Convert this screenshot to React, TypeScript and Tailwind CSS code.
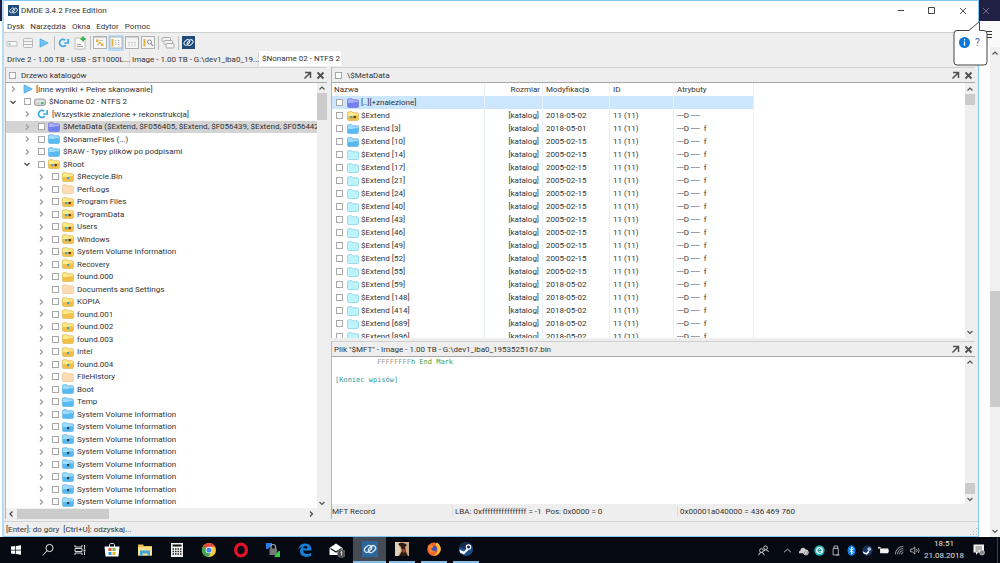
import React from "react";

const tree = [
  { name: "[Inne wyniki + Pełne skanowanie]", level: 0, icon: "play", state: "closed" },
  { name: "$Noname 02 - NTFS 2", level: 0, icon: "drive", state: "open" },
  { name: "[Wszystkie znalezione + rekonstrukcja]", level: 1, icon: "refresh", state: "closed" },
  { name: "$MetaData ($Extend, $F056405, $Extend, $F056439, $Extend, $F056442, $E", level: 1, icon: "indigo", state: "closed", selected: true },
  { name: "$NonameFiles (...)", level: 1, icon: "blue", state: "closed" },
  { name: "$RAW - Typy plików po podpisami", level: 1, icon: "blue", state: "closed" },
  { name: "$Root", level: 1, icon: "yellow2", state: "open" },
  { name: "$Recycle.Bin", level: 2, icon: "yellow1", state: "closed" },
  { name: "PerfLogs", level: 2, icon: "pale", state: "closed" },
  { name: "Program Files", level: 2, icon: "yellow2", state: "closed" },
  { name: "ProgramData", level: 2, icon: "yellow2", state: "closed" },
  { name: "Users", level: 2, icon: "yellow2", state: "closed" },
  { name: "Windows", level: 2, icon: "yellow2", state: "closed" },
  { name: "System Volume Information", level: 2, icon: "yellow2", state: "closed" },
  { name: "Recovery", level: 2, icon: "yellow1", state: "closed" },
  { name: "found.000", level: 2, icon: "yellow", state: "closed" },
  { name: "Documents and Settings", level: 2, icon: "pale", state: "none" },
  { name: "KOPIA", level: 2, icon: "yellow1", state: "closed" },
  { name: "found.001", level: 2, icon: "yellow", state: "closed" },
  { name: "found.002", level: 2, icon: "yellow1", state: "closed" },
  { name: "found.003", level: 2, icon: "yellow", state: "closed" },
  { name: "Intel", level: 2, icon: "yellow1", state: "closed" },
  { name: "found.004", level: 2, icon: "yellow1", state: "closed" },
  { name: "FileHistory", level: 2, icon: "pale", state: "closed" },
  { name: "Boot", level: 2, icon: "blue", state: "closed" },
  { name: "Temp", level: 2, icon: "blue", state: "closed" },
  { name: "System Volume Information", level: 2, icon: "blue", state: "closed" },
  { name: "System Volume Information", level: 2, icon: "blue1", state: "closed" },
  { name: "System Volume Information", level: 2, icon: "blue1", state: "closed" },
  { name: "System Volume Information", level: 2, icon: "blue1", state: "closed" },
  { name: "System Volume Information", level: 2, icon: "blue1", state: "closed" },
  { name: "System Volume Information", level: 2, icon: "blue1", state: "closed" },
  { name: "System Volume Information", level: 2, icon: "blue1", state: "closed" },
  { name: "System Volume Information", level: 2, icon: "blue1", state: "closed" },
];

const files = [
  { name: "$Extend", date: "2018-05-02", icon: "yellow2", attr: "---D ----" },
  { name: "$Extend [3]", date: "2018-05-01", icon: "blue", attr: "---D ----  f" },
  { name: "$Extend [10]", date: "2005-02-15", icon: "blue", attr: "---D ----  f" },
  { name: "$Extend [14]", date: "2005-02-15", icon: "cyan", attr: "---D ----  f" },
  { name: "$Extend [17]", date: "2005-02-15", icon: "cyan", attr: "---D ----  f" },
  { name: "$Extend [21]", date: "2005-02-15", icon: "cyan", attr: "---D ----  f" },
  { name: "$Extend [24]", date: "2005-02-15", icon: "cyan", attr: "---D ----  f" },
  { name: "$Extend [40]", date: "2005-02-15", icon: "cyan", attr: "---D ----  f" },
  { name: "$Extend [43]", date: "2005-02-15", icon: "cyan", attr: "---D ----  f" },
  { name: "$Extend [46]", date: "2005-02-15", icon: "cyan", attr: "---D ----  f" },
  { name: "$Extend [49]", date: "2005-02-15", icon: "cyan", attr: "---D ----  f" },
  { name: "$Extend [52]", date: "2005-02-15", icon: "cyan", attr: "---D ----  f" },
  { name: "$Extend [55]", date: "2005-02-15", icon: "cyan", attr: "---D ----  f" },
  { name: "$Extend [59]", date: "2018-05-02", icon: "cyan", attr: "---D ----  f" },
  { name: "$Extend [148]", date: "2018-05-02", icon: "cyan", attr: "---D ----  f" },
  { name: "$Extend [414]", date: "2018-05-02", icon: "cyan", attr: "---D ----  f" },
  { name: "$Extend [689]", date: "2018-05-02", icon: "cyan", attr: "---D ----  f" },
  { name: "$Extend [896]", date: "2018-05-02", icon: "cyan", attr: "---D ----  f" },
];

const folderColors: Record<string, string[]> = {
  indigo: ["#a9aef9", "#7380ee", "#6470dd"],
  blue: ["#9fdcff", "#58b8f2", "#55aee0"],
  cyan: ["#bdf3fd", "#bdf3fd", "#7fd0de"],
  yellow: ["#fdeb8c", "#f4c04a", "#dcae45"],
  pale: ["#fbdcb4", "#fbdcb4", "#ecc796"],
};

const Folder = ({ kind }: { kind: string }) => {
  const dots = kind.endsWith("2") ? 2 : kind.endsWith("1") ? 1 : 0;
  const base = kind.replace(/[12]$/, "");
  const [top, bottom, line] = folderColors[base];
  return (
    <svg viewBox="0 0 12 10" className="h-[10px] w-3 shrink-0">
      <path d="M.5 2Q.5.7 1.8.7h3l1 1.1h4.2Q11.5 1.8 11.5 3v5.2q0 1.3-1.3 1.3H1.8Q.5 9.500.5 8.200z" fill={top} stroke={line} strokeWidth=".7" />
      <path d="M1 5h5l1-.8h4V8.200q0 .9-.9.9H1.900Q1 9.100 1 8.200z" fill={bottom} />
      {dots === 2 && <rect x="3.200" y="5" width="2.200" height="2.200" fill="#3fa0c8" />}
      {dots === 2 && <rect x="6.500" y="5" width="2.400" height="2.200" fill="#5c3a12" />}
      {dots === 1 && <rect x="5" y="5" width="2.200" height="2.200" fill={base === "blue" ? "#3c3c3c" : "#3fa0c8"} />}
    </svg>
  );
};

const Logo = ({ className, bg = "#1f4a7a" }: { className: string; bg?: string }) => (
  <svg viewBox="0 0 24 24" className={className}>
    <rect width="24" height="24" fill={bg} />
    <g fill="none" stroke="#e4eef8" strokeWidth="1.900">
      <rect x="3" y="8" width="12" height="7.500" rx="3.500" transform="rotate(-42 9 11.750)" />
      <rect x="9" y="8.500" width="12" height="7.500" rx="3.500" transform="rotate(-42 15 12.250)" />
    </g>
  </svg>
);

const Play = () => (
  <svg viewBox="0 0 10 10" className="h-[10px] w-[10px] shrink-0">
    <path d="M1 .8 9.200 5 1 9.200z" fill="#6cc4f5" stroke="#3fa5e0" strokeWidth=".7" />
  </svg>
);

const Refresh = () => (
  <svg viewBox="0 0 12 10" className="h-[10px] w-3 shrink-0" fill="none" stroke="#3fa9e8" strokeWidth="1.700">
    <path d="M7.200 2.200A3.500 3.500 0 1 0 7.800 7" />
    <path d="M10.200 1v4H6.300" />
  </svg>
);

const Drive = () => (
  <svg viewBox="0 0 12 10" className="h-[10px] w-3 shrink-0">
    <rect x=".5" y="2" width="11" height="6.500" rx="2" fill="#d2d2d2" stroke="#8c8c8c" strokeWidth=".8" />
    <path d="M2 4h8" stroke="#f5f5f5" />
    <rect x="7.500" y="5.200" width="2" height="2" fill="#36b24a" />
  </svg>
);

const NodeIcon = ({ kind }: { kind: string }) => {
  if (kind === "play") return <Play />;
  if (kind === "refresh") return <Refresh />;
  if (kind === "drive") return <Drive />;
  return <Folder kind={kind} />;
};

const Chevron = ({ dir, className = "" }: { dir: string; className?: string }) => {
  const d: Record<string, string> = {
    up: "M1.500 5.500 4 3l2.500 2.500",
    down: "M1.500 3 4 5.500 6.500 3",
    left: "M5.500 1.500 3 4l2.500 2.500",
    right: "M3 1.500 5.500 4 3 6.500",
  };
  return (
    <svg viewBox="0 0 8 8" className={"h-2 w-2 shrink-0 " + className} fill="none" stroke="currentColor" strokeWidth="1.200">
      <path d={d[dir]} />
    </svg>
  );
};

const Check = ({ label }: { label: string }) => (
  <input type="checkbox" aria-label={label} className="h-[7px] w-[7px] shrink-0 appearance-none border border-[#a8a8a8] bg-white" />
);

const PanelButtons = () => (
  <div className="ml-auto flex items-center gap-1">
    <button aria-label="Odepnij panel">
      <svg viewBox="0 0 9 9" className="h-[9px] w-[9px]" fill="none" stroke="#505050" strokeWidth="1.500">
        <path d="M2 1.500h5.500V7M7.500 1.500 1.500 7.500" />
      </svg>
    </button>
    <button aria-label="Zamknij panel">
      <svg viewBox="0 0 9 9" className="h-[9px] w-[9px]" fill="none" stroke="#505050" strokeWidth="1.900">
        <path d="m1.500 1.500 6 6m0-6-6 6" />
      </svg>
    </button>
  </div>
);

const PanelHeader = ({ title, check }: { title: string; check?: boolean }) => (
  <div className="flex h-4 shrink-0 items-center border-t border-b border-t-[#d0d0d0] border-b-[#a8a8a8] bg-[#eeeeee] pr-[2px] pl-[2px]">
    {check && (
      <span className="mr-[5px] ml-px flex">
        <Check label={title} />
      </span>
    )}
    <h2 className="whitespace-nowrap">{title}</h2>
    <PanelButtons />
  </div>
);

const Window = () => {
  return (
    <div className="flex min-w-0 flex-1 flex-col border-t border-r border-b border-l-2 border-[#86c8f2] border-l-[#b5def5] bg-[#eeeeee]">
      {/* title bar */}
      <div className="flex h-[19px] shrink-0 items-center bg-white pl-1">
        <Logo className="h-[11px] w-[11px]" />
        <h1 className="pl-[2px]">DMDE 3.4.2 Free Edition</h1>
        <div className="ml-auto flex text-[#444]">
          <button aria-label="Minimalizuj" className="flex w-[30px] justify-center">
            <svg viewBox="0 0 8 8" className="h-2 w-2" stroke="currentColor" fill="none"><path d="M1 3.500h6" /></svg>
          </button>
          <button aria-label="Maksymalizuj" className="flex w-[31px] justify-center">
            <svg viewBox="0 0 8 8" className="h-2 w-2" stroke="currentColor" fill="none"><path d="M.5.5h6v6h-6z" /></svg>
          </button>
          <button aria-label="Zamknij" className="flex w-[31px] justify-center">
            <svg viewBox="0 0 8 8" className="h-2 w-2" stroke="currentColor" strokeWidth=".9" fill="none"><path d="m1 1 6 6m0-6L1 7" /></svg>
          </button>
        </div>
      </div>

      {/* menu */}
      <nav className="flex h-[13px] shrink-0 items-center gap-[6px] border-b border-[#cfcfcf] bg-white pl-[3px]">
        <button>Dysk</button>
        <button>Narzędzia</button>
        <button>Okna</button>
        <button>Edytor</button>
        <button>Pomoc</button>
      </nav>

      <Toolbar />

      {/* tabs */}
      <div className="flex h-[14px] shrink-0 items-end text-left whitespace-nowrap">
        <button className="h-[14px] w-[126px] border-r border-[#d9d9d9] pl-[3px] text-left">Drive 2 - 1.00 TB - USB - ST1000L...</button>
        <button className="h-[14px] w-[129px] border-r border-[#d9d9d9] pl-[2px] text-left">Image - 1.00 TB - G:\dev1_lba0_19...</button>
        <button className="h-[15px] w-[82px] bg-white pl-[3px] text-left">$Noname 02 - NTFS 2</button>
      </div>

      <div className="flex min-h-0 flex-1 gap-1 pr-[3px] pb-[2px] pl-px">
        <TreePanel />
        <div className="flex min-w-0 flex-1 flex-col gap-[3px]">
          <ListPanel />
          <FilePanel />
        </div>
      </div>

      <footer className="flex h-[15px] shrink-0 items-center border-t border-[#d4d4d4] pl-[2px]">
        <span className="whitespace-pre">[Enter]: do góry  [Ctrl+U]: odzyskaj...</span>
        <svg viewBox="0 0 8 8" className="mt-auto ml-auto h-2 w-2" fill="#b8b8b8">
          <path d="M6 0h1v1H6zM6 3h1v1H6zM6 6h1v1H6zM3 3h1v1H3zM3 6h1v1H3zM0 6h1v1H0z" />
        </svg>
      </footer>
    </div>
  );
};

const Separator = () => (
  <div className="flex w-1 justify-center">
    <div className="h-[14px] w-px bg-[#bdbdbd]" />
  </div>
);

const Toolbar = () => {
  const btn = "flex h-4 w-4 shrink-0 items-center justify-center";
  return (
    <div className="flex h-[19px] shrink-0 items-center">
      <button aria-label="Dysk" className={btn}>
        <svg viewBox="0 0 12 12" className="h-3 w-3">
          <rect x="1" y="4.500" width="10" height="4.500" rx=".5" fill="#fafafa" stroke="#aaa" strokeWidth=".8" />
          <path d="M2.500 7h2" stroke="#45b050" />
        </svg>
      </button>
      <button aria-label="Partycje" className={btn}>
        <svg viewBox="0 0 12 12" className="h-3 w-3" fill="#f6f6f6" stroke="#aaa" strokeWidth=".8">
          <rect x="1.500" y="1.500" width="9" height="9" rx="1" />
          <path d="M1.500 4.500h9M1.500 7.500h9" />
        </svg>
      </button>
      <button aria-label="Skanuj" className={btn}><Play /></button>
      <Separator />
      <button aria-label="Odśwież" className={btn}><Refresh /></button>
      <button aria-label="Nowy raport" className={btn}>
        <svg viewBox="0 0 14 14" className="h-[14px] w-[14px]">
          <path d="M2 2h10v11H2z" fill="#fafafa" stroke="#b0b0b0" strokeWidth=".8" />
          <path d="M4 10.500h6M4 8.500h4" stroke="#888" strokeWidth=".8" />
          <path d="M10 .5v5M7.500 3h5" stroke="#39b54a" strokeWidth="2" />
        </svg>
      </button>
      <Separator />
      <button aria-label="Drzewo" className={btn}>
        <svg viewBox="0 0 14 13" className="h-[13px] w-[14px]">
          <rect x=".5" y=".5" width="13" height="12" fill="#f8f8f8" stroke="#b0b0b0" />
          <path d="M1 1.700h12" stroke="#ccc" />
          <path d="M3 3.500h2.500v2.500H3zM5.500 6h2.500v2H5.500zM8 7.500h2.500v2.500H8z" fill="#e3b341" />
          <path d="M6.500 4.500h3.500M4 8.500h2" stroke="#aaa" strokeWidth=".7" />
        </svg>
      </button>
      <button aria-label="Drzewo i lista" aria-pressed="true" className={btn + " bg-[#b9dcf8]"}>
        <svg viewBox="0 0 14 13" className="h-[13px] w-[14px]">
          <rect x="1" y="1" width="12" height="11" fill="#f8f8f8" stroke="#a6a6a6" strokeWidth=".8" />
          <path d="M3.500 3v7.500" stroke="#e3b341" strokeWidth="2" />
          <path d="M6 4.500h1.500M6 6.500h1.500M6 8.500h1.500M9 4.500h1.500M9 6.500h1.500M9 8.500h1.500" stroke="#aaa" strokeWidth=".8" />
        </svg>
      </button>
      <button aria-label="Lista" className={btn}>
        <svg viewBox="0 0 14 13" className="h-[13px] w-[14px]">
          <rect x=".5" y=".5" width="13" height="12" fill="#f6f6f6" stroke="#b0b0b0" />
          <path d="M1 1.700h12" stroke="#ccc" />
          <path d="M3 6.500h2M6 6.500h2M9 6.500h2M3 9h2M6 9h2M9 9h2" stroke="#bbb" strokeWidth=".8" />
        </svg>
      </button>
      <button aria-label="Szukaj" className={btn}>
        <svg viewBox="0 0 14 13" className="h-[13px] w-[14px]">
          <rect x=".5" y=".5" width="13" height="12" fill="#f6f6f6" stroke="#b0b0b0" />
          <path d="M3.500 3v7.500" stroke="#e3b341" strokeWidth="2" />
          <circle cx="8.500" cy="6" r="2" fill="#fff" stroke="#888" />
          <path d="m10 7.500 2 2.500" stroke="#888" strokeWidth="1.200" />
        </svg>
      </button>
      <Separator />
      <button aria-label="Okna" className={btn}>
        <svg viewBox="0 0 14 14" className="h-[14px] w-[14px]" fill="#f2f2f2" stroke="#a4a4a4" strokeWidth=".9">
          <rect x="1" y="1.500" width="8.500" height="4" rx=".8" />
          <rect x="3" y="4.500" width="8.500" height="4" rx=".8" />
          <rect x="5" y="7.500" width="8" height="4.500" rx=".8" />
        </svg>
      </button>
      <Separator />
      <button aria-label="O programie" className={btn}><Logo className="h-[13px] w-[13px]" /></button>
    </div>
  );
};

const TreePanel = () => {
  return (
    <section className="mt-px flex w-[322px] shrink-0 flex-col border-l border-[#b4b4b4]">
      <PanelHeader title="Drzewo katalogów" check />
      <div className="flex min-h-0 flex-1">
        <div className="grid min-w-0 flex-1 auto-rows-fr bg-white">
          {tree.map((node, i) => (
            <div key={i} className={"flex min-h-0 items-center overflow-hidden pl-[3px] whitespace-nowrap " + (node.selected ? "bg-[#d4d4d4]" : "")}>
              {node.level > 0 && <span className={node.level === 1 ? "w-[14px] shrink-0" : "w-7 shrink-0"} />}
              {node.state === "none" ? (
                <span className="w-2" />
              ) : (
                <button aria-label="Rozwiń" className={node.state === "open" ? "text-[#444]" : "text-[#999]"}>
                  <Chevron dir={node.state === "open" ? "down" : "right"} />
                </button>
              )}
              {node.icon === "play" || node.icon === "refresh" ? (
                <span className="w-[6px] shrink-0" />
              ) : (
                <span className="mr-[3px] ml-[7px] flex">
                  <Check label={node.name} />
                </span>
              )}
              <NodeIcon kind={node.icon} />
              <span className="pl-[3px]">{node.name}</span>
            </div>
          ))}
        </div>
        <div className="flex w-[10px] flex-col items-center bg-[#efefef] py-px text-[#555]">
          <Chevron dir="up" />
          <div className="mt-px h-[27px] w-full bg-[#cbcbcb]" />
          <Chevron dir="down" className="mt-auto" />
        </div>
      </div>
      <div className="flex h-[11px] shrink-0 items-center bg-[#efefef] pr-3 pl-px text-[#444]">
        <Chevron dir="left" />
        <div className="ml-[2px] h-[10px] w-[92px] bg-[#cbcbcb]" />
        <Chevron dir="right" className="ml-auto" />
      </div>
    </section>
  );
};

const ListPanel = () => {
  const cell = "border-r border-[#e8f1f8] p-0";
  return (
    <section className="mt-px flex min-h-0 flex-1 flex-col border-l border-[#b4b4b4]">
      <PanelHeader title="\$MetaData" check />
      <div className="flex min-h-0 flex-1 bg-white">
        <div className="min-w-0 flex-1 overflow-hidden">
          <table className="w-[422px] table-fixed border-separate border-spacing-0 whitespace-nowrap">
            <thead>
              <tr className="h-[13px] text-left">
                <th className={cell + " w-[153px] pl-[2px] font-normal"}>Nazwa</th>
                <th className={cell + " w-[58px] pr-[2px] text-right font-normal"}>Rozmiar</th>
                <th className={cell + " w-[67px] pl-[3px] font-normal"}>Modyfikacja</th>
                <th className={cell + " w-16 pl-[3px] font-normal"}>ID</th>
                <th className={cell + " pl-[3px] font-normal"}>Atrybuty</th>
              </tr>
            </thead>
            <tbody>
              <tr className="h-[13px] bg-[#cbe6fd]">
                <td className={cell}>
                  <div className="flex items-center pl-1">
                    <Check label="[..]" />
                    <span className="ml-1 flex"><Folder kind="indigo" /></span>
                    <span className="pl-[2px]">[..][+znalezione]</span>
                  </div>
                </td>
                <td className={cell}></td>
                <td className={cell}></td>
                <td className={cell}></td>
                <td className={cell}></td>
              </tr>
              {files.map((file) => (
                <tr key={file.name} className="h-[13px]">
                  <td className={cell}>
                    <div className="flex items-center pl-1">
                      <Check label={file.name} />
                      <span className="ml-1 flex"><Folder kind={file.icon} /></span>
                      <span className="pl-[2px]">{file.name}</span>
                    </div>
                  </td>
                  <td className={cell + " pr-[3px] text-right"}>[katalog]</td>
                  <td className={cell + " pl-[3px]"}>{file.date}</td>
                  <td className={cell + " pl-[3px]"}>11 (11)</td>
                  <td className={cell + " pl-[3px] whitespace-pre"}>{file.attr}</td>
                </tr>
              ))}
            </tbody>
          </table>
        </div>
        <div className="flex w-[10px] flex-col items-center bg-[#efefef] py-[2px] text-[#555]">
          <Chevron dir="up" />
          <div className="mt-px h-[11px] w-full bg-[#cbcbcb]" />
          <Chevron dir="down" className="mt-auto" />
        </div>
      </div>
    </section>
  );
};

const FilePanel = () => {
  return (
    <section className="flex h-[178px] shrink-0 flex-col border-l border-[#b4b4b4]">
      <PanelHeader title={'Plik "$MFT" - Image - 1.00 TB - G:\\dev1_lba0_1953525167.bin'} />
      <div className="flex min-h-0 flex-1 bg-white">
        <div className="flex-1 pt-px pl-[3px] font-['DejaVu_Sans_Mono',monospace] text-[7px] leading-[9px] whitespace-pre">
          <p className="text-[#3f9f3f]">          <span className="text-[#9a9a9a]">FFFFFFFF</span>h End Mark</p>
          <p> </p>
          <p className="text-[#2f9a9a]">[Koniec wpisów]</p>
        </div>
        <div className="flex w-[10px] flex-col items-center bg-[#efefef] py-px text-[#555]">
          <Chevron dir="up" />
          <div className="mt-auto mb-px h-[11px] w-full bg-[#cbcbcb]" />
          <Chevron dir="down" />
        </div>
      </div>
      <div className="flex h-[15px] shrink-0 items-center whitespace-pre">
        <span className="w-[121px] border-r border-[#dcdcdc]">MFT Record</span>
        <span className="w-[225px] border-r border-[#dcdcdc] pl-[2px]">LBA: 0xffffffffffffffff = -1  Pos: 0x0000 = 0</span>
        <span className="pl-[2px]">0x00001a040000 = 436 469 760</span>
      </div>
    </section>
  );
};

// browser window that sticks out behind on the right
const Browser = () => {
  return (
    <div className="flex w-[21px] shrink-0 flex-col bg-white">
      <div className="flex h-[21px] items-center bg-[#1f2044] pl-[3px] text-[#6c6d8c]">
        <button aria-label="Zamknij przeglądarkę">
          <svg viewBox="0 0 8 8" className="h-2 w-2" fill="none" stroke="currentColor"><path d="m1 1 6 6m0-6L1 7" /></svg>
        </button>
      </div>
      <div className="flex h-[26px] items-center bg-[#f9f9fa] pl-1">
        <button aria-label="Menu">
          <svg viewBox="0 0 9 8" className="h-2 w-[9px]" stroke="#333"><path d="M0 1.500h9M0 4.500h9M0 7.500h9" /></svg>
        </button>
      </div>
      <div className="ml-auto flex w-[10px] flex-1 flex-col items-center bg-[#f0f0f0] py-[2px] text-[#555]">
        <Chevron dir="up" />
        <div className="flex w-full flex-1 flex-col">
          <div className="flex-[234]" />
          <div className="flex-[116] bg-[#cbcbcb]" />
          <div className="flex-[120]" />
        </div>
        <Chevron dir="down" />
      </div>
    </div>
  );
};

const Callout = () => (
  <div className="absolute top-[21px] right-[12px] h-[45px] w-[35px]">
    <svg viewBox="0 0 35 45" className="absolute inset-0 h-full w-full">
      <path d="M4 9.500h12L26.500.5V9.500H31q3 0 3 3V41q0 3-3 3H4q-3 0-3-3V12.500q0-3 3-3z" fill="#fff" stroke="#444" />
    </svg>
    <div className="relative flex items-center gap-[5px] pt-4 pl-[6px]">
      <svg viewBox="0 0 12 12" className="h-[11px] w-[11px]">
        <circle cx="6" cy="6" r="6" fill="#0a78d6" />
        <path d="M6 5v4.500M6 2.300v1.500" stroke="#fff" strokeWidth="1.400" />
      </svg>
      <a href="#pomoc" className="text-[10px] leading-[11px] text-[#4a63b8]">?</a>
    </div>
  </div>
);

const apps = [
  {
    name: "Start",
    icon: <path d="M3 4.500 7.300 4v3.700H3zM8 3.900 13 3.200v4.500H8zM3 8.400h4.300V12L3 11.500zM8 8.400h5v4.400l-5-.7z" fill="#fff" />,
  },
  {
    name: "Szukaj",
    icon: <g fill="none" stroke="#e6e6e6"><circle cx="9.500" cy="6" r="3.600" /><path d="m7 8.700-4.300 4.800" /></g>,
  },
  {
    name: "Widok zadań",
    icon: <g fill="none" stroke="#d6d6d6"><path d="M3 3v2h7V3M3 13v-2h7v2M3 6.500h7v3H3zM12.500 3v4M12.500 10v3" /><path d="M12.500 7.500v2" strokeWidth="2" /></g>,
  },
  {
    name: "Sklep",
    icon: (
      <g>
        <path d="M5.500 5V2.500q0-1 2.500-1t2.500 1V5" fill="none" stroke="#ddd" />
        <path d="M.5 4.500h15L14.500 14.500h-13z" fill="#fff" />
        <path d="M4.500 6h3v3h-3z" fill="#e8502a" /><path d="M8.500 6h3v3h-3z" fill="#7cb92a" />
        <path d="M4.500 10h3v3h-3z" fill="#1ea0e8" /><path d="M8.500 10h3v3h-3z" fill="#f5b520" />
      </g>
    ),
  },
  {
    name: "Eksplorator plików",
    icon: (
      <g>
        <path d="M1 2.500h5l1 1.500h8v9.500H1z" fill="#e9bd4f" />
        <path d="M1 5h14v8.500H1z" fill="#fbe08c" />
        <path d="M3 14V8.500h10V14h-2.500v-2.500h-5V14z" fill="#3fa6dd" />
      </g>
    ),
  },
  {
    name: "Kalkulator",
    icon: (
      <g>
        <path d="M2 1h12v14H2z" fill="#f2f2f2" />
        <path d="M3.500 2.500h9v2h-9z" fill="#111" />
        <path d="M3.500 7h9M3.500 9.500h9M3.500 12h9" stroke="#222" strokeWidth="1.300" strokeDasharray="1.500 1" />
      </g>
    ),
  },
  {
    name: "Chrome",
    icon: (
      <g>
        <circle cx="8" cy="8" r="7" fill="#f6cc3a" />
        <path d="M8 8 1.900 4.500A7 7 0 0 1 14.200 4.700H8z" fill="#e24a3a" />
        <path d="M8 8 1.900 4.500A7 7 0 0 0 7.300 15L10.800 9.500z" fill="#3fa653" />
        <circle cx="8" cy="8" r="3.300" fill="#fff" /><circle cx="8" cy="8" r="2.600" fill="#4486ee" />
      </g>
    ),
  },
  {
    name: "Opera",
    icon: <ellipse cx="8" cy="8" rx="5.400" ry="5.900" fill="none" stroke="#e3122a" strokeWidth="3.200" />,
  },
  {
    name: "Kłódka",
    icon: (
      <g>
        <path d="M1 1h6v2L3 7H1z" fill="#2c7be8" />
        <path d="M6 7V4.500q0-2 2.200-2T10.500 4.500V7" fill="none" stroke="#aaa" strokeWidth="1.200" />
        <path d="M4.500 6.500h7.500v6.500H4.500z" fill="#777" />
        <path d="M15 15H9l1.500-2 3-4H15z" fill="#2ecc40" />
      </g>
    ),
  },
  {
    name: "Edge",
    icon: <path d="M1.500 7.500C2 3.500 5 1.500 8.300 1.500c4 0 6.200 2.800 6.200 7H6c.2 2.500 2.200 3.500 4.300 3.500 1.500 0 2.700-.4 3.700-1v2.700c-1.200.8-2.800 1.100-4.500 1.100-4 0-6.500-2.300-6.500-5.500 0-2.200 1.200-3.800 2.700-4.800C3.800 5 2.500 6 1.500 7.500zM6 6.300h4.700c0-1.600-.8-2.400-2.200-2.400S6.200 4.800 6 6.300z" fill="#1580dc" />,
  },
  {
    name: "Poczta",
    icon: (
      <g>
        <path d="M.5 6 7 1.500 13.500 6v7H.5z" fill="#fff" />
        <path d="M1.500 6.500 7 10l5.500-3.500" fill="none" stroke="#111" strokeWidth="1.300" />
        <circle cx="12.500" cy="11.500" r="4" fill="#4c4c4c" stroke="#888" strokeWidth=".6" />
        <path d="m11.500 10.300 1.200-.8v4" fill="none" stroke="#fff" strokeWidth=".9" />
      </g>
    ),
  },
  { name: "DMDE", active: true, open: true, icon: null },
  {
    name: "Zdjęcie",
    open: true,
    icon: (
      <g>
        <path d="M1 1h14v14H1z" fill="#c9a687" />
        <path d="M1 1h6L5 5l2 4-3 6H1z" fill="#e3d0b8" />
        <path d="M4 3q4-3 9 1l-2 2 1 5 2 4H5l3-5-1-4z" fill="#2a1a12" />
        <path d="M8 8h3l1 3-3 1z" fill="#9c4a22" />
      </g>
    ),
  },
  {
    name: "Firefox",
    open: true,
    icon: (
      <g>
        <circle cx="8" cy="8.300" r="6.700" fill="#f5642a" />
        <path d="M11 1.500q4 3 3.700 7.500-2 6-8 5.500Q12 13 11.500 8q0-3-2-4.500z" fill="#fbc22c" />
        <circle cx="7.700" cy="8" r="3.200" fill="#3a4fc0" />
        <path d="M1.500 4 3 5l2-1.500L8 6 5 7.500l2 2.800 3-1q-1.500 3-4.500 2.300Q2.500 10.500 3 7z" fill="#f8892c" />
      </g>
    ),
  },
  {
    name: "Steam",
    open: true,
    icon: (
      <g>
        <circle cx="8" cy="8" r="7" fill="#1b4f8c" />
        <path d="M1.200 6.300A7 7 0 0 1 14.500 5.500L9 8z" fill="#152a50" />
        <circle cx="10.500" cy="6" r="2.200" fill="none" stroke="#fff" strokeWidth="1.200" />
        <path d="m1.300 8.500 4.500 1.900 3.200-3 1.800 1.300-3.500 3.200q-.8 1.800-2.500 1.200L2 11.500z" fill="#fff" />
      </g>
    ),
  },
];

const tray = [
  { name: "Pokaż ukryte ikony", icon: <path d="M3 10.500 8 6l5 4.500" fill="none" stroke="#ddd" strokeWidth="1.300" /> },
  {
    name: "OneDrive",
    icon: <g><path d="M1.500 12q-1-3 2-4 .5-4 4-4 2.500 0 3.500 2.500 3.500 0 3.500 3T12 12z" fill="#d0d0d0" /><circle cx="11.500" cy="11" r="3.600" fill="#999" stroke="#eee" /><path d="M11.500 9v4" stroke="#fff" strokeWidth="1.300" /></g>,
  },
  {
    name: "ESET",
    icon: <g><circle cx="8" cy="8" r="7.500" fill="#1fb5b8" /><circle cx="8" cy="8" r="5" fill="#e8fafa" /><path d="M6 8h4.500Q10 5.500 8 5.500T5.800 8 8 10.500h2" fill="none" stroke="#128a8d" strokeWidth="1.400" /></g>,
  },
  { name: "USB", icon: <path d="M6 5V1.500h5V5M4.500 5h7.500v9.500H4.500zM9 14.500h5" fill="none" stroke="#ccc" strokeWidth="1.200" /> },
  {
    name: "Bluetooth",
    icon: <g><ellipse cx="8" cy="8" rx="5.800" ry="7.500" fill="#0a7af0" /><path d="m5 5.500 6 5-3 2.700V2.800l3 2.700-6 5" fill="none" stroke="#fff" strokeWidth="1.300" /></g>,
  },
  {
    name: "Steam",
    icon: <g><circle cx="8" cy="8" r="7.500" fill="#17335e" /><circle cx="10.500" cy="6" r="2.600" fill="#a9c4e8" /><path d="m1 9 5 2.500 3-3 2 1.500-4 4-5-2z" fill="#fff" /></g>,
  },
  { name: "Bateria", icon: <g><path d="M3 5h12v7H3z" fill="#f2f2f2" /><path d="M0 4h4M1.500 2.500v3" stroke="#eee" strokeWidth="1.500" /><path d="M15 7h1v3h-1z" fill="#eee" /></g> },
  {
    name: "Sieć",
    icon: <path d="M2 13.500A11.500 11.500 0 0 1 13.500 2M5 13.500A8.500 8.500 0 0 1 13.500 5M8 13.500A5.500 5.500 0 0 1 13.500 8M11 13.500a2.500 2.500 0 0 1 2.500-2.500" fill="none" stroke="#b8b8b8" strokeWidth="1.200" />,
  },
  {
    name: "Głośność",
    icon: <path d="M1 6h2.500L7 3v10L3.500 10H1zM9.500 6q1.500 2 0 4M12 4.500q2.500 3.500 0 7" fill="none" stroke="#ccc" strokeWidth="1.200" />,
  },
];

const Taskbar = () => {
  return (
    <div className="flex h-[26px] shrink-0 bg-[#050a12] text-[#e0e0e0]">
      <div className="grid w-[482px] grid-cols-15">
        {apps.map((app) => (
          <button key={app.name} aria-label={app.name} className={"flex flex-col items-center " + (app.active ? "bg-[#454b54]" : "")}>
            <span className="flex flex-1 items-center">
              {app.icon ? <svg viewBox="0 0 16 16" className="h-4 w-4">{app.icon}</svg> : <Logo className="h-4 w-4" bg="#2b669c" />}
            </span>
            {app.open && <span className={"h-[2px] bg-[#86bde6] " + (app.active ? "w-full" : "w-[26px]")} />}
          </button>
        ))}
      </div>
      <div className="ml-auto flex items-center">
        <button aria-label="Kontakty" className="mr-2 flex w-4 justify-center">
          <svg viewBox="0 0 16 16" className="h-[11px] w-[11px]" fill="none" stroke="#ddd" strokeWidth="1.300">
            <circle cx="11" cy="4" r="2.700" /><path d="M8 9q3-4 7 0v1" />
            <circle cx="5" cy="8" r="2.700" /><path d="M1 15q0-4 4-4t4 4" />
          </svg>
        </button>
        {tray.map((item) => (
          <button key={item.name} aria-label={item.name} className="flex w-4 justify-center">
            <svg viewBox="0 0 16 16" className="h-[11px] w-[11px]">{item.icon}</svg>
          </button>
        ))}
        <div className="w-[42px] text-center leading-3">
          <p>18:51</p>
          <p>21.08.2018</p>
        </div>
        <button aria-label="Centrum akcji" className="mr-3 ml-2">
          <svg viewBox="0 0 12 12" className="h-3 w-3">
            <path d="M.5.5h10.500v8H5L3 11V8.500H.5z" fill="#f2f2f2" />
            <path d="M2.500 3h6.500M2.500 5h6.500M2.500 7h3" stroke="#555" strokeWidth=".8" />
            <circle cx="9" cy="8.500" r="2.500" fill="#888" stroke="#ddd" strokeWidth=".6" />
          </svg>
        </button>
        <div className="h-full w-[3px] border-l border-[#3c4148]" />
      </div>
    </div>
  );
};

const App = () => {
  return (
    <div className="flex h-screen flex-col overflow-hidden bg-white font-[Roboto,sans-serif] text-[8px] leading-[11px] text-[#333]">
      <div className="relative flex min-h-0 flex-1">
        <div className="w-[2px] shrink-0 bg-white">
          <div className="h-[21px] bg-[#1f2044]" />
        </div>
        <Window />
        <Browser />
        <Callout />
      </div>
      <Taskbar />
    </div>
  );
};

export default App;
